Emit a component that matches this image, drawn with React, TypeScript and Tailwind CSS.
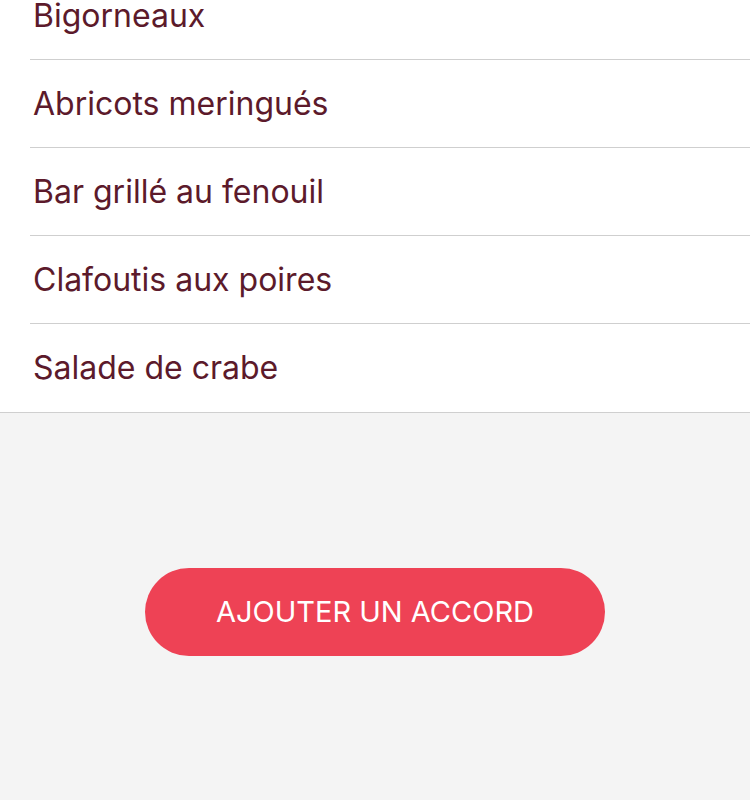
const items = [
  'Bigorneaux',
  'Abricots meringués',
  'Bar grillé au fenouil',
  'Clafoutis aux poires',
  'Salade de crabe'
];

export default function App() {
  return (
    <div className="flex h-[800px] w-[750px] flex-col overflow-hidden bg-[#f4f4f4] font-['Inter',sans-serif]">
      <ul className="-mt-[28px] border-b border-[#cfcfcf] bg-white">
        {items.map((item, i) => (
          <li key={item} className="pl-[30px]">
            <div
              className={
                i === items.length - 1
                  ? 'flex h-[88px] items-center pl-[3px] text-[32px] text-[#5c1a2b]'
                  : 'flex h-[88px] items-center border-b border-[#cfcfcf] pl-[3px] text-[32px] text-[#5c1a2b]'
              }
            >
              {item}
            </div>
          </li>
        ))}
      </ul>
      <div className="flex justify-center pt-[155px]">
        <button className="h-[88px] w-[460px] rounded-full bg-[#ee4255] text-[29px] text-white">
          AJOUTER UN ACCORD
        </button>
      </div>
    </div>
  );
}
